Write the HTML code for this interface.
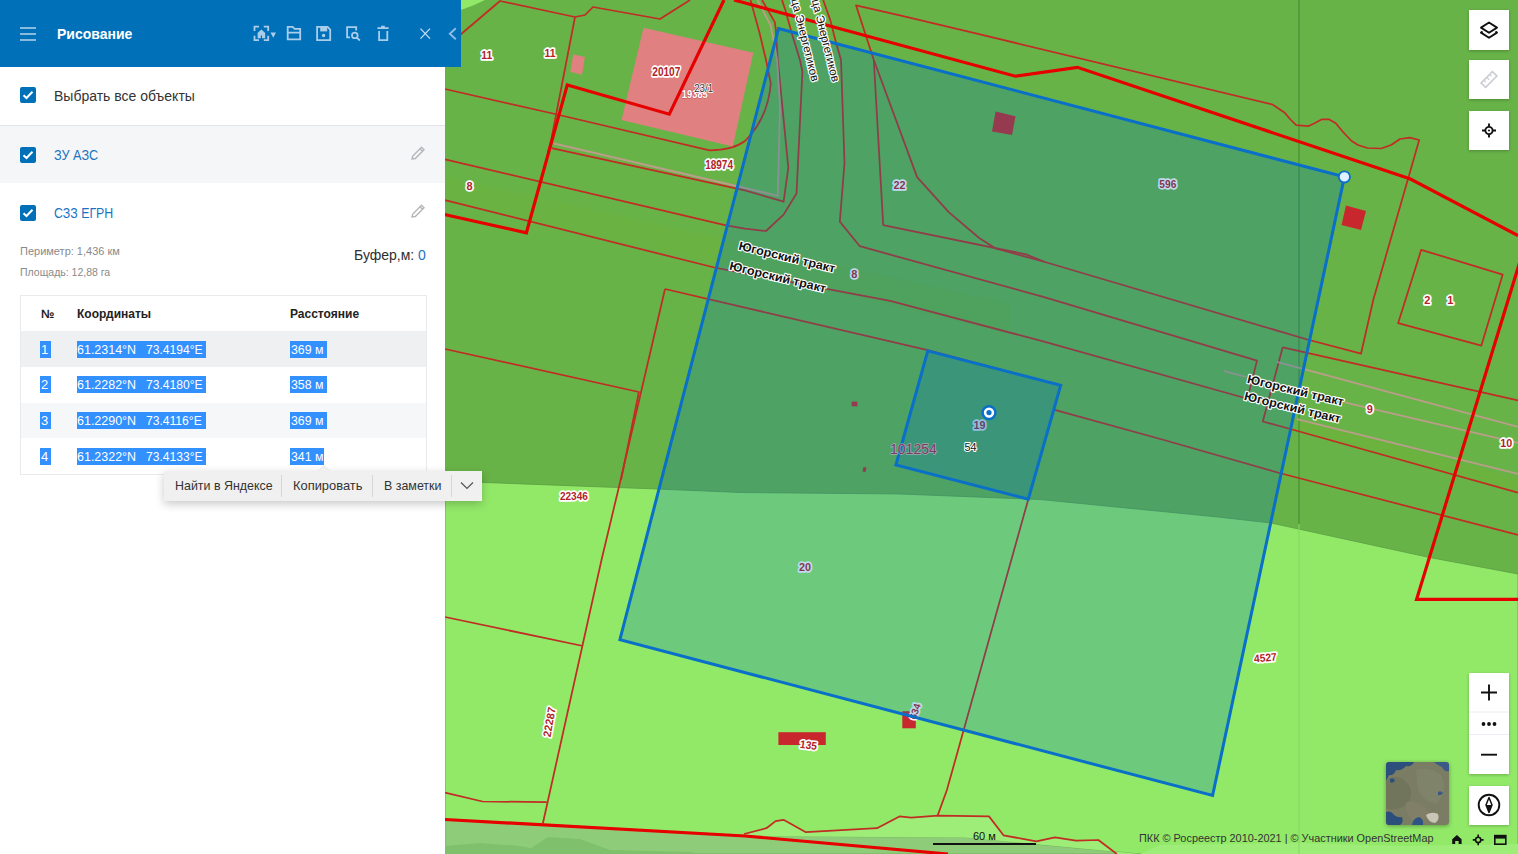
<!DOCTYPE html>
<html><head><meta charset="utf-8">
<style>
*{margin:0;padding:0;box-sizing:border-box}
html,body{width:1518px;height:854px;overflow:hidden;background:#69b347;font-family:"Liberation Sans",sans-serif}
.abs{position:absolute}
#map{position:absolute;left:0;top:0;width:1518px;height:854px}
#panel{position:absolute;left:0;top:0;width:445px;height:854px;background:#fff}
#hdr{position:absolute;left:0;top:0;width:461px;height:67px;background:#0070b9}
.t{position:absolute;white-space:nowrap;line-height:1;transform-origin:0 0}
.cb{position:absolute;left:20px;width:16px;height:16px;background:#0070b9;border-radius:2px}
.ctl{background:#fff;box-shadow:0 1px 3px rgba(0,0,0,0.25)}
.sel{background:#3390ff;color:#fff}
.st{font-size:13px;color:#fff}
.cm{font-size:13.5px;color:#333;transform:scaleX(0.92)}
</style></head><body>
<svg id="map" width="1518" height="854" viewBox="0 0 1518 854">
<rect x="0" y="0" width="1518" height="854" fill="#68b348"/>
<path d="M445 481 L657 489 L740 492.5 L900 494 L1040 499.5 L1218 517 L1271 523 L1427 557 L1518 574 L1518 854 L445 854 Z" fill="#92e968" stroke="#5a9e45" stroke-width="0.8"/>
<path d="M445 0 L485 0 Q465 10 445 14 Z" fill="#92e968"/>
<path d="M445 819.5 L745 836 L964 837.4 L1140 854 L445 854 Z" fill="#8fcc79" stroke="#6fae5a" stroke-width="0.8"/>
<path d="M445 846 L480 843 L520 846 L560 854 L445 854 Z M522 854 L548 837 L580 839 L610 850 L690 852 L700 854 Z" fill="#7fc06c"/>
<path d="M740 836.1 L766.4 828.2 L775.6 821.1 L783.5 819.8 L805.9 832.2 L877 828.2 L899.4 816.4 L911.3 817.7 L937.6 815.6 L989 816.4 L1003.5 835.3 L1036.4 841.4 L1054.9 837.4 L1076 840.6 L1098.4 840 L1116.8 854 L1140 854 L964 837.4 Z" fill="#9ded78"/>
<path d="M1140 854 L1160 845 L1300 843 L1400 846 L1518 844 L1518 854 Z" fill="#9ded78"/>
<path d="M445 176 L745 244 L1010 304 L1010 334 L745 270 L445 202 Z" fill="#6cb13c" opacity="0.55"/>
<path d="M1299 419 L1518 478 L1518 494 L1299 432Z" fill="#6cb13c" opacity="0.8"/>
<line x1="1299" y1="0" x2="1299" y2="524" stroke="#408a32" stroke-width="1.1" opacity="0.95"/><line x1="1299" y1="524" x2="1299" y2="854" stroke="#86d862" stroke-width="1.2" opacity="0.8"/>
<g fill="none" stroke="#c12c24" stroke-width="1.75" stroke-linejoin="round">
<path d="M440 52 L500 1 L575 17 L585 15 L593 7 L660 19 L690 0"/>
<path d="M575 17 L551 141 L548 152"/>
<path d="M445 89 L555 114 L709.6 150.4 Q733 150 745 141 Q768 118 770.8 83.4 L766 60 L759.5 32.7 L750.5 0"/>
<path d="M551.6 148.1 L745 190.3 L783.6 201.7 L788.3 167.7 L777.8 60 L775.8 29.5 L774.8 22.1 L762 0"/>
<path d="M445 159.3 L726 225.4 L745 228.6 L766 231 L783.6 214.6 L796.5 193.5 L802.4 71.7 L800 60 L791.6 32.7 L785.8 11.6 L782 0"/>
<path d="M445 200.1 L714.3 267.5 L745 273.4 L890.2 300.9 L1045 341.9 L1252 400"/>
<path d="M823.2 0 L830.6 21.1 L835.9 42.2 L841 60 L844.5 163 L839.8 221.6 L859.8 246.2 L1045 297.4 L1257 360.6 L1249 392"/>
<path d="M856 5.3 L873.8 60 L917.1 177.1 L948.7 212.2 L979.2 238 L995.6 248.5 L1045 262 L1307.3 339.5 L1361 353.7 L1373.3 299.8 L1419.2 140 L1409.9 137.7 L1400 139 L1391.1 145 L1381.2 148.5 L1367.4 148 L1358 145 L1351.6 141 L1343 132 L1335.8 123.2 L1328.9 119.3 L1322 119.3 L1314 123.5 L1308.1 126.2 L1296.2 125.2 L1290 119 L1284.4 112.4 L1272.5 104.5 L980 34.4 L900 15.3 Z"/>
<path d="M873.8 60 L883.2 225.1 L1026 254.4 L1045 262"/>
<path d="M665 289 L745 307.6 L927.7 350.1 L1060.7 385.4"/>
<path d="M1053.8 409.7 L1164 440 L1279.4 473 L1518 535"/>
<path d="M665 289 L620.6 480 L601.5 560 L542.9 823.3"/>
<path d="M445 349 L638.9 392 L621 480"/>
<path d="M445 617 L583 646"/>
<path d="M445 792.6 L482.5 801.5 L546.8 802.1"/>
<path d="M744 834 L766.4 828.2 L775.6 821.1 L783.5 819.8 L805.9 832.2 L877 828.2 L899.4 816.4 L911.3 817.7 L937.6 815.6 L989 816.4 L1003.5 835.3 L1036.4 841.4 L1054.9 837.4 L1076 840.6 L1098.4 840 L1116.8 854"/>
<path d="M1028.3 499.2 L946.9 790 L937.6 815.6"/>
<path d="M1282.7 347.3 L1305 352.4 L1518 400.5"/>
<path d="M1282.7 347.3 L1262.8 421.5 L1288.6 428.5 L1518 492.6"/>
<path d="M1421.2 249.8 L1502.7 274.6 L1481.4 345.6 L1398.1 323.2 Z"/>
</g>
<g fill="none" stroke="#c49a90" stroke-width="1.8" opacity="0.9">
<path d="M554 143.5 L745 188 L777.8 195.8 L780 106.8 L777.2 60 L770.6 25.3 L757.4 0"/>
<path d="M1224.2 371.1 L1246.4 377 M1276.9 361.8 L1518 427 M1296.8 419.2 L1518 474 M1344.6 402.4 L1518 442.8"/>
</g>
<g fill="#e08080">
<path d="M643.5 27.8 L753.3 52.7 L732.8 146.4 L621.5 120 Z"/>
<path d="M573.2 54.2 L584.9 57.1 L582 74.7 L570.3 71.7 Z"/>
</g>
<g fill="#c8282d">
<path d="M995.6 111.5 L1015.5 116.2 L1012 135 L992 131.4 Z"/>
<path d="M1346 205.6 L1366 211 L1361 230 L1341.5 225 Z"/>
<rect x="778.4" y="732.2" width="47.4" height="12.8"/>
<rect x="902.3" y="711.2" width="13.5" height="17.1"/>
<rect x="851.6" y="401.6" width="5.8" height="4.7"/>
<path d="M863.5 467 L866.5 467.5 L865.5 472 L862.5 471.5Z"/>
</g>
<g fill="none" stroke="#e60000" stroke-width="3.2" stroke-linejoin="miter">
<path d="M440 213.5 L526.4 232.8 L567.3 84.9 L669.3 114.2 L724 0"/>
<path d="M734 0 L1015.4 76.2 L1077.4 67.3 L1410.5 179 L1518 235.6"/>
<path d="M1521 258 L1416.6 599.3 L1518 599.3"/>
<path d="M445 819.5 L745 836 L948 854"/>
</g>
<g font-family="Liberation Sans" font-weight="bold" fill="#b01f2a" stroke="#fff" stroke-width="3.4" paint-order="stroke" stroke-linejoin="round" text-anchor="middle">
<text x="486.7" y="58.5" font-size="11" textLength="11" lengthAdjust="spacingAndGlyphs">11</text>
<text x="550" y="57" font-size="11" textLength="11" lengthAdjust="spacingAndGlyphs">11</text>
<text x="469.6" y="189.6" font-size="11">8</text>
<text x="666.3" y="75.5" font-size="12" textLength="28" lengthAdjust="spacingAndGlyphs">20107</text>
<text x="694.8" y="97.5" font-size="11" fill="#fff" stroke="#c04048" stroke-width="0.8" textLength="26" lengthAdjust="spacingAndGlyphs">19385</text>
<text x="719.1" y="169.2" font-size="12" textLength="27.8" lengthAdjust="spacingAndGlyphs">18974</text>
<text x="899.6" y="189.3" font-size="11" textLength="12" lengthAdjust="spacingAndGlyphs">22</text>
<text x="1167.8" y="187.6" font-size="11" textLength="17" lengthAdjust="spacingAndGlyphs">596</text>
<text x="854.4" y="277.5" font-size="11">8</text>
<text x="1427.2" y="303.5" font-size="11">2</text>
<text x="1450.2" y="303.5" font-size="11">1</text>
<text x="1369.8" y="413.3" font-size="11">9</text>
<text x="1506.2" y="447" font-size="11" textLength="12" lengthAdjust="spacingAndGlyphs">10</text>
<text x="979.5" y="428.6" font-size="11" textLength="12" lengthAdjust="spacingAndGlyphs">19</text>
<text x="573.9" y="499.7" font-size="11" textLength="28" lengthAdjust="spacingAndGlyphs">22346</text>
<text x="805" y="571.4" font-size="11" textLength="12" lengthAdjust="spacingAndGlyphs">20</text>
<text x="1265.3" y="661.4" font-size="11" textLength="23" lengthAdjust="spacingAndGlyphs" transform="rotate(-5 1265.3 657.4)">4527</text>
<text x="549.2" y="725.9" font-size="11" textLength="30" lengthAdjust="spacingAndGlyphs" transform="rotate(-80 549.2 721.9)">22287</text>
<text x="808.6" y="749" font-size="11" textLength="17" lengthAdjust="spacingAndGlyphs" transform="rotate(8 808.6 745)">135</text>
<text x="914.6" y="715.2" font-size="10" textLength="16" lengthAdjust="spacingAndGlyphs" transform="rotate(-72 914.6 711.2)">634</text>
</g>
<path d="M778.5 28.5 L1344.4 176.9 L1212.6 795.5 L619.9 639.7 Z" fill="#0070b8" fill-opacity="0.25" stroke="#0a6fc8" stroke-width="3" stroke-linejoin="miter"/>
<path d="M927.8 350.9 L1060.7 385.4 L1028.3 499.2 L895.9 465 Z" fill="#0070b8" fill-opacity="0.25" stroke="#0a6fc8" stroke-width="3" stroke-linejoin="miter"/>
<circle cx="1344.4" cy="176.9" r="5.6" fill="#dff0ff" stroke="#0a6fc8" stroke-width="1.8"/>
<circle cx="989" cy="412.6" r="6.4" fill="#fff" stroke="#0a6fc8" stroke-width="2.4"/>
<circle cx="989" cy="412.6" r="2.6" fill="#0a6fc8"/>
<text x="913.4" y="453.5" font-family="Liberation Sans" font-size="14.5" fill="#7f3a64" stroke="#c9b6c8" stroke-opacity="0.7" stroke-width="1.4" paint-order="stroke" text-anchor="middle" textLength="46.7" lengthAdjust="spacingAndGlyphs">101254</text>
<g font-family="Liberation Sans" fill="#111" stroke="#fff" stroke-width="2.2" paint-order="stroke" stroke-linejoin="round" text-anchor="middle">
<text x="703.7" y="91.6" font-size="11" fill="#333" stroke-width="1.5" textLength="19" lengthAdjust="spacingAndGlyphs">23/1</text>
<text x="970.6" y="451" font-size="10.5" stroke-width="2" textLength="12" lengthAdjust="spacingAndGlyphs">54</text>
<g font-weight="bold" font-size="12">
<text x="787" y="261.2" textLength="99" lengthAdjust="spacingAndGlyphs" transform="rotate(13.5 787 257.2)">Югорский тракт</text>
<text x="777.8" y="281.2" textLength="99" lengthAdjust="spacingAndGlyphs" transform="rotate(13.5 777.8 277.2)">Югорский тракт</text>
<text x="1295.6" y="394.5" textLength="99" lengthAdjust="spacingAndGlyphs" transform="rotate(13.5 1295.6 390.5)">Югорский тракт</text>
<text x="1292.6" y="411.5" textLength="99" lengthAdjust="spacingAndGlyphs" transform="rotate(13.5 1292.6 407.5)">Югорский тракт</text>
</g>
<g font-size="11.5" stroke-width="2.4" text-anchor="end">
<text x="0" y="0" transform="translate(807.8 83) rotate(76) translate(0 -4)" textLength="104" lengthAdjust="spacingAndGlyphs">улица Энергетиков</text>
<text x="0" y="0" transform="translate(828.3 83.5) rotate(76) translate(0 -4)" textLength="104" lengthAdjust="spacingAndGlyphs">улица Энергетиков</text>
</g>
</g>
</svg>
<div class="abs ctl" style="left:1469px;top:10px;width:40px;height:40px"><svg width="40" height="40"><path d="M20 22.5 L28 27.6 L20 32.7 L12 27.6 Z" fill="none" stroke="#111" stroke-width="1.9" stroke-linejoin="round" transform="translate(0 -10)"/><path d="M13.6 25.5 L12 26.6 L20 31.7 L28 26.6 L26.4 25.5" fill="none" stroke="#111" stroke-width="1.9" stroke-linejoin="round" transform="translate(0 -4)"/></svg></div>
<div class="abs ctl" style="left:1469px;top:60px;width:40px;height:39px"><svg width="40" height="39"><g transform="rotate(-45 20 19.5)"><rect x="12" y="16.3" width="16" height="6.4" fill="none" stroke="#c9ccd2" stroke-width="1.6"/><path d="M16 16.3V19 M20 16.3V19.8 M24 16.3V19" stroke="#c9ccd2" stroke-width="1.2"/></g></svg></div>
<div class="abs ctl" style="left:1469px;top:111px;width:40px;height:39px"><svg width="40" height="39"><circle cx="20" cy="19.5" r="3.6" fill="none" stroke="#111" stroke-width="1.9"/><circle cx="20" cy="19.5" r="1" fill="#111"/><path d="M20 12.5V16 M20 23V26.5 M13 19.5H16.5 M23.5 19.5H27" stroke="#111" stroke-width="1.9"/></svg></div>
<div class="abs ctl" style="left:1469px;top:673px;width:40px;height:101px"><svg width="40" height="101"><path d="M12 19.5H28 M20 11.5V27.5" stroke="#111" stroke-width="1.9"/><path d="M0 39H40 M0 61.5H40" stroke="#ececf2" stroke-width="1"/><circle cx="14.5" cy="51" r="1.9" fill="#111"/><circle cx="20" cy="51" r="1.9" fill="#111"/><circle cx="25.5" cy="51" r="1.9" fill="#111"/><path d="M12 81.7H28" stroke="#111" stroke-width="1.9"/></svg></div>
<div class="abs ctl" style="left:1469px;top:786px;width:40px;height:39px"><svg width="40" height="39"><circle cx="20" cy="19" r="10.3" fill="none" stroke="#111" stroke-width="1.9"/><path d="M20 11.5 L23 19 L20 26.5 L17 19 Z" fill="none" stroke="#111" stroke-width="1.5" stroke-linejoin="round"/><path d="M20 19 L23 19 L20 26.5 L17 19 Z" fill="#111"/></svg></div>
<div class="abs" style="left:1386px;top:762px;width:63px;height:63px;border-radius:3px;overflow:hidden;box-shadow:0 1px 4px rgba(0,0,0,0.35)">
<svg width="63" height="63"><rect width="63" height="63" fill="#7a7d63"/>
<path d="M0 18 Q12 10 22 22 Q30 35 18 44 Q8 50 0 46Z" fill="#6f7359" opacity="0.8"/>
<path d="M30 8 Q45 4 56 14 Q62 30 50 42 Q38 40 32 28Z" fill="#81856a" opacity="0.8"/>
<path d="M20 40 Q35 38 44 52 Q40 60 26 58 Q18 50 20 40Z" fill="#85806a" opacity="0.7"/>
<path d="M0 0 H28 Q26 5 20 4 Q16 9 10 8 Q8 14 3 13 Q1 18 0 18Z" fill="#2c4f7c"/>
<path d="M48 0 H63 V9 Q58 10 56 5 Q52 4 48 0Z" fill="#34578a" opacity="0.9"/>
<path d="M4 17 Q8 15 9 19 Q6 22 4 20Z" fill="#2c4f7c"/>
<path d="M0 50 Q5 48 8 53 Q12 56 16 55 Q18 60 14 63 H0Z" fill="#2b4e7b"/>
<path d="M26 63 Q27 56 33 55 Q38 57 37 63Z" fill="#2f5382"/>
<path d="M40 53 Q46 49 52 52 Q54 58 49 61 Q42 60 40 53Z" fill="#c9c6b8"/>
<path d="M52 30 Q55 28 57 31 Q55 34 52 33Z" fill="#3a5a86"/>
</svg></svg></div>
<div class="t" style="left:1139px;top:833px;font-size:11px;color:#333;transform:scaleX(0.99)">ПКК © Росреестр 2010-2021 | © Участники OpenStreetMap</div>
<svg class="abs" style="left:1450px;top:833px" width="60" height="14">
<path d="M2.2 11V6.2 L6.9 2 L11.6 6.2 V11 H8.6 V8 H5.2 V11Z" fill="#111"/>
<circle cx="28.2" cy="6.9" r="2.6" fill="none" stroke="#111" stroke-width="1.6"/><path d="M28.2 1.5V4 M28.2 9.8V12.3 M22.8 6.9H25.3 M31.1 6.9H33.6" stroke="#111" stroke-width="1.6"/>
<rect x="44.8" y="2.6" width="11" height="8.6" fill="none" stroke="#111" stroke-width="1.6"/><rect x="44.8" y="2.6" width="11" height="3" fill="#111"/>
</svg>
<div class="abs" style="left:933px;top:843px;width:103px;height:2px;background:#111"></div>
<div class="t" style="left:973px;top:831px;font-size:11px;color:#111">60 м</div>
<div id="panel">
  <div class="abs" style="left:0;top:125px;width:445px;height:1px;background:#e3e5e8"></div>
  <div class="abs" style="left:0;top:126px;width:445px;height:57px;background:#f5f6f8"></div>
  <div class="cb" style="top:87px"><svg width="16" height="16"><path d="M3.5 8.2 L6.5 11 L12.5 4.8" stroke="#fff" stroke-width="2" fill="none"/></svg></div>
  <div class="t" id="t1" style="left:54px;top:89px;font-size:14px;color:#333">Выбрать все объекты</div>
  <div class="cb" style="top:147px"><svg width="16" height="16"><path d="M3.5 8.2 L6.5 11 L12.5 4.8" stroke="#fff" stroke-width="2" fill="none"/></svg></div>
  <div class="t" id="t2" style="left:54px;top:147px;font-size:15px;transform:scaleX(0.846);color:#1b74bf">ЗУ АЗС</div>
  <div class="cb" style="top:205px"><svg width="16" height="16"><path d="M3.5 8.2 L6.5 11 L12.5 4.8" stroke="#fff" stroke-width="2" fill="none"/></svg></div>
  <div class="t" id="t3" style="left:54px;top:205px;font-size:15px;transform:scaleX(0.824);color:#1b74bf">СЗЗ ЕГРН</div>
  <svg class="abs" style="left:410px;top:145px" width="16" height="16"><path d="M2 14 L2.8 11 L11.5 2.3 L14 4.8 L5.3 13.5 Z M10 3.8 L12.5 6.3" stroke="#b4b6b9" stroke-width="1.4" fill="none"/></svg>
  <svg class="abs" style="left:410px;top:203px" width="16" height="16"><path d="M2 14 L2.8 11 L11.5 2.3 L14 4.8 L5.3 13.5 Z M10 3.8 L12.5 6.3" stroke="#b4b6b9" stroke-width="1.4" fill="none"/></svg>
  <div class="t" id="t4" style="left:20px;top:246px;font-size:11px;color:#8a8a8a">Периметр: 1,436 км</div>
  <div class="t" id="t5" style="left:20px;top:267px;font-size:11px;transform:scaleX(0.955);color:#8a8a8a">Площадь: 12,88 га</div>
  <div class="t" id="t6" style="left:354px;top:248px;font-size:14px;color:#2e2e2e">Буфер,м: <span style="color:#1b74bf">0</span></div>
  <div class="abs" style="left:20px;top:295px;width:407px;height:180px;border:1px solid #e9eaec;background:#fff">
    <div class="abs" style="left:0;top:35px;width:405px;height:36px;background:#eff0f2"></div>
    <div class="abs" style="left:0;top:107px;width:405px;height:35px;background:#f6f7f9"></div>
  </div>
  <div class="t" id="h1" style="left:41px;top:308px;font-size:12px;font-weight:bold;color:#222">№</div>
  <div class="t" id="h2" style="left:77px;top:308px;font-size:12px;font-weight:bold;color:#222">Координаты</div>
  <div class="t" id="h3" style="left:290px;top:308px;font-size:12px;font-weight:bold;color:#222">Расстояние</div>
  <div class="abs sel" style="left:40px;top:341px;width:11px;height:17px"></div>
  <div class="abs sel" style="left:77px;top:341px;width:129px;height:17px"></div>
  <div class="abs sel" style="left:290px;top:341px;width:37px;height:17px"></div>
  <div class="abs sel" style="left:40px;top:376px;width:11px;height:17px"></div>
  <div class="abs sel" style="left:77px;top:376px;width:129px;height:17px"></div>
  <div class="abs sel" style="left:290px;top:376px;width:37px;height:17px"></div>
  <div class="abs sel" style="left:40px;top:412px;width:11px;height:17px"></div>
  <div class="abs sel" style="left:77px;top:412px;width:129px;height:17px"></div>
  <div class="abs sel" style="left:290px;top:412px;width:37px;height:17px"></div>
  <div class="abs sel" style="left:40px;top:448px;width:11px;height:17px"></div>
  <div class="abs sel" style="left:77px;top:448px;width:129px;height:17px"></div>
  <div class="abs sel" style="left:290px;top:448px;width:34px;height:17px"></div>
    <div class="t st" style="left:41px;top:343px">1</div><div class="t st" style="left:77px;top:343px;transform:scaleX(0.96)">61.2314°N</div><div class="t st" style="left:146px;top:343px;transform:scaleX(0.93)">73.4194°E</div><div class="t st" style="left:291px;top:343px;transform:scaleX(0.95)">369 м</div>
  <div class="t st" style="left:41px;top:378px">2</div><div class="t st" style="left:77px;top:378px;transform:scaleX(0.96)">61.2282°N</div><div class="t st" style="left:146px;top:378px;transform:scaleX(0.93)">73.4180°E</div><div class="t st" style="left:291px;top:378px;transform:scaleX(0.95)">358 м</div>
  <div class="t st" style="left:41px;top:414px">3</div><div class="t st" style="left:77px;top:414px;transform:scaleX(0.96)">61.2290°N</div><div class="t st" style="left:146px;top:414px;transform:scaleX(0.93)">73.4116°E</div><div class="t st" style="left:291px;top:414px;transform:scaleX(0.95)">369 м</div>
  <div class="t st" style="left:41px;top:450px">4</div><div class="t st" style="left:77px;top:450px;transform:scaleX(0.96)">61.2322°N</div><div class="t st" style="left:146px;top:450px;transform:scaleX(0.93)">73.4133°E</div><div class="t st" style="left:291px;top:450px;transform:scaleX(0.95)">341 м</div>
</div>
<div id="hdr">
  <svg class="abs" style="left:19px;top:26px" width="18" height="16"><path d="M1 2H17M1 8H17M1 14H17" stroke="#b6d3ec" stroke-width="1.7"/></svg>
  <div class="t" id="hd" style="left:57px;top:27px;font-size:14px;font-weight:bold;color:#fff">Рисование</div>
  <svg class="abs" style="left:0;top:0" width="461" height="67" fill="none" stroke="#aacdeb" stroke-width="1.8">
    <path d="M254.5 31V26.7H259 M263.8 26.7H268.2V31 M268.2 35.8V40.2H263.8 M259 40.2H254.5V35.8"/>
    <path d="M258.2 37.6V33.2L261.4 30.2L264.6 33.2V37.6H262.6V34.8H260.2V37.6Z" fill="#aacdeb" stroke-width="1.2"/>
    <path d="M270.5 32.4H276L273.25 37.8Z" fill="#aacdeb" stroke="none"/>
    <path d="M287.7 39.4V26.8H292.6L294.6 28.8H300.2V39.4Z M287.7 32.6H300.2"/>
    <path d="M317.1 40.2V26.8H327.6L330.2 29.6V40.2Z"/>
    <rect x="320.2" y="27" width="7" height="4.4" fill="#aacdeb" stroke="none"/>
    <circle cx="323.6" cy="35.5" r="1.7" fill="#aacdeb" stroke="none"/>
    <path d="M350 37.4H347.1V27.2H356.2V30.6"/>
    <circle cx="354.8" cy="35.4" r="2.8"/>
    <path d="M356.9 37.6L359.8 40.5"/>
    <path d="M377.4 28.1H388.6 M381.2 26.7H384.8" stroke-width="1.7"/>
    <path d="M379.1 30.9V40.2H387.3V30.9"/>
    <path d="M420.5 28.6L430 38.6M430 28.6L420.5 38.6" stroke="#c6ddf1" stroke-width="1.3"/>
    <path d="M455.8 28.2L449.8 33.7L455.8 39.2" stroke="#8fbce6" stroke-width="1.9"/>
  </svg>
</div>
<div id="ctx" class="abs" style="left:164px;top:471px;width:318px;height:30px;background:#f0f0f0;box-shadow:0 3px 10px rgba(0,0,0,0.22)">
  <svg class="abs" style="left:152px;top:-6px" width="16" height="7"><path d="M1 7 L8 0.8 L15 7Z" fill="#f0f0f0" stroke="#e2e2e2" stroke-width="0.8"/><rect x="0" y="6" width="16" height="1" fill="#f0f0f0"/></svg>
  <div class="t cm" style="left:11px;top:8px">Найти в Яндексе</div>
  <div class="abs" style="left:117px;top:4px;width:1px;height:22px;background:#d6d6d6"></div>
  <div class="t cm" style="left:129px;top:8px;transform:scaleX(0.955)">Копировать</div>
  <div class="abs" style="left:208px;top:4px;width:1px;height:22px;background:#d6d6d6"></div>
  <div class="t cm" style="left:220px;top:8px">В заметки</div>
  <div class="abs" style="left:287px;top:4px;width:1px;height:22px;background:#d6d6d6"></div>
  <svg class="abs" style="left:296px;top:10px" width="14" height="9"><path d="M1 1.5 L7 7.5 L13 1.5" stroke="#555" stroke-width="1.2" fill="none"/></svg>
</div>
</body></html>
